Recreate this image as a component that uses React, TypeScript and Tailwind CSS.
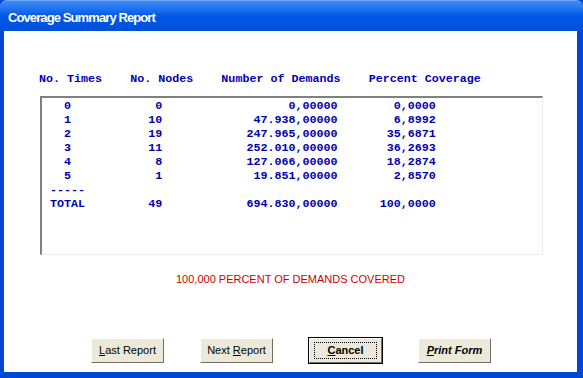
import React from "react";

const rows = [
  ["0", "0", "0,00000", "0,0000"],
  ["1", "10", "47.938,00000", "6,8992"],
  ["2", "19", "247.965,00000", "35,6871"],
  ["3", "11", "252.010,00000", "36,2693"],
  ["4", "8", "127.066,00000", "18,2874"],
  ["5", "1", "19.851,00000", "2,8570"],
];

// fixed columns: nodes end at col 16, demands at 41, percent at 55
const line = (t: string, n: string, d: string, p: string) =>
  t.padEnd(16 - n.length) + n + d.padStart(25) + p.padStart(14);

const mono = { fontFamily: '"Liberation Mono", "Courier New", monospace' };
const sans = { fontFamily: '"Liberation Sans", Tahoma, Arial, sans-serif' };

const XpButton = ({
  children,
  isDefault,
}: {
  children: React.ReactNode;
  isDefault?: boolean;
}) => (
  <div
    className={
      "w-[75px] h-[27px] " +
      (isDefault ? "border border-black" : "border border-transparent")
    }
  >
    <div className="w-full h-full bg-[#ece9d8] border-t border-l border-white border-r border-b border-r-[#716f64] border-b-[#716f64] flex items-center justify-center">
      <div
        className={
          "px-1 text-[11px] text-black leading-[13px] " +
          (isDefault ? "border border-dotted border-black px-[12px] py-[1px]" : "")
        }
        style={sans}
      >
        {children}
      </div>
    </div>
  </div>
);

export default function App() {
  return (
    <div className="w-[583px] h-[378px] flex flex-col bg-[#0047d4] overflow-hidden">
      <div className="h-[31px] rounded-t-[7px] bg-gradient-to-b from-[#3d8cf6] via-[#0058e8] to-[#0050d8] border-t border-[#6fa4f7] flex items-end pb-[5px] pl-[8px]">
        <span className="text-white font-bold text-[13px] leading-[16px] tracking-[-0.9px]" style={sans}>
          Coverage Summary Report
        </span>
      </div>
      <div className="flex-1 bg-white ml-[4px] mr-[6px] mb-[6px] flex flex-col">
        <div
          className="mt-[41px] ml-[35px] text-[11.7px] leading-[14px] font-bold text-[#0000b0] whitespace-pre"
          style={mono}
        >
          {"No. Times    No. Nodes    Number of Demands    Percent Coverage"}
        </div>
        <div className="mt-[10px] ml-[36px] w-[503px] h-[159px] border-t-2 border-l-2 border-t-[#808080] border-l-[#808080] border-r border-b border-r-[#ececec] border-b-[#ececec] pl-[8px] pt-[1px]">
          <div
            className="text-[11.7px] leading-[14px] font-bold text-[#0000b0] whitespace-pre"
            style={mono}
          >
            {rows.map((r) => (
              <div key={r[0]}>{line("  " + r[0], r[1], r[2], r[3])}</div>
            ))}
            <div>-----</div>
            <div>{line("TOTAL", "49", "694.830,00000", "100,0000")}</div>
          </div>
        </div>
        <div className="mt-[18px] text-center text-[11px] text-[#d00000] leading-[13px]" style={sans}>
          100,000 PERCENT OF DEMANDS COVERED
        </div>
        <div className="mt-[51px] ml-[86px] flex gap-[34px]">
          <XpButton>
            <u>L</u>ast Report
          </XpButton>
          <XpButton>
            Next <u>R</u>eport
          </XpButton>
          <XpButton isDefault>
            <span className="font-bold">
              <u>C</u>ancel
            </span>
          </XpButton>
          <XpButton>
            <span className="font-bold italic">
              <u>P</u>rint Form
            </span>
          </XpButton>
        </div>
      </div>
    </div>
  );
}
